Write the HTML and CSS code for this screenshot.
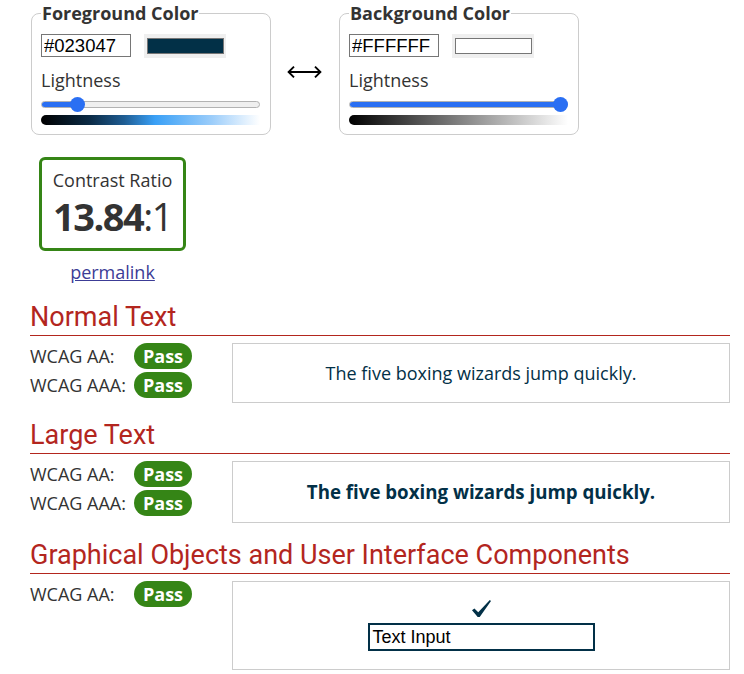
FILE: index.html
```html
<!DOCTYPE html>
<html lang="en">
<head>
<meta charset="utf-8">
<title>Contrast Checker</title>
<link rel="stylesheet" href="styles.css">
</head>
<body>
<div class="page">
  <div class="pickers">
    <fieldset class="picker">
      <legend>Foreground Color</legend>
      <div class="pick-row">
        <input class="hex" type="text" value="#023047">
        <div class="swatch"><span class="swatch-color swatch-fg"></span></div>
      </div>
      <div class="light-label">Lightness</div>
      <div class="slider">
        <div class="track"><div class="fill" style="width:36px"></div></div>
        <div class="thumb" style="left:29px"></div>
      </div>
      <div class="grad grad-fg"></div>
    </fieldset>
    <div class="swap" aria-label="swap colors">
      <svg width="35" height="14" viewBox="0 0 35 14" aria-hidden="true">
        <path d="M1.5 7 H33.5" stroke="#000" stroke-width="1.8" fill="none"/>
        <path d="M7 1.6 L1.6 7 L7 12.4" stroke="#000" stroke-width="1.9" fill="none" stroke-linejoin="miter"/>
        <path d="M28 1.6 L33.4 7 L28 12.4" stroke="#000" stroke-width="1.9" fill="none" stroke-linejoin="miter"/>
      </svg>
    </div>
    <fieldset class="picker">
      <legend>Background Color</legend>
      <div class="pick-row">
        <input class="hex" type="text" value="#FFFFFF">
        <div class="swatch"><span class="swatch-color swatch-bg"></span></div>
      </div>
      <div class="light-label">Lightness</div>
      <div class="slider">
        <div class="track"><div class="fill" style="width:219px"></div></div>
        <div class="thumb" style="left:204px"></div>
      </div>
      <div class="grad grad-bg"></div>
    </fieldset>
  </div>

  <div class="ratio-wrap">
    <div class="ratio-box">
      <div class="ratio-label">Contrast Ratio</div>
      <div class="ratio-value"><b>13.84</b>:1</div>
    </div>
    <a class="permalink" href="#">permalink</a>
  </div>

  <section class="result">
    <h2 class="result-title">Normal Text</h2>
    <div class="result-body">
      <div class="checks">
        <div class="check"><span class="lbl">WCAG AA:</span><span class="pass">Pass</span></div>
        <div class="check"><span class="lbl">WCAG AAA:</span><span class="pass">Pass</span></div>
      </div>
      <div class="sample sample-normal">The five boxing wizards jump quickly.</div>
    </div>
  </section>

  <section class="result">
    <h2 class="result-title">Large Text</h2>
    <div class="result-body">
      <div class="checks">
        <div class="check"><span class="lbl">WCAG AA:</span><span class="pass">Pass</span></div>
        <div class="check"><span class="lbl">WCAG AAA:</span><span class="pass">Pass</span></div>
      </div>
      <div class="sample sample-large">The five boxing wizards jump quickly.</div>
    </div>
  </section>

  <section class="result">
    <h2 class="result-title">Graphical Objects and User Interface Components</h2>
    <div class="result-body">
      <div class="checks">
        <div class="check"><span class="lbl">WCAG AA:</span><span class="pass">Pass</span></div>
      </div>
      <div class="sample sample-ui">
        <svg class="checkmark" width="19" height="17" viewBox="0 0 18 16" aria-hidden="true">
          <path d="M0 9.6 L2.3 7.9 L5.9 11.6 L16.9 0 L18 0.8 L7.3 16 L5.4 16 Z" fill="#023047"/>
        </svg>
        <div class="ui-input">Text Input</div>
      </div>
    </div>
  </section>
</div>
</body>
</html>
```

FILE: styles.css
```css
html, body {
  margin: 0;
  padding: 0;
  background: #fff;
}

body {
  font-family: "Open Sans", "Liberation Sans", sans-serif;
  color: #333;
}

.page {
  padding: 1px 14px 0 30px;
}

/* ---------- colour pickers ---------- */
.pickers {
  display: flex;
  align-items: flex-start;
}

.picker {
  margin: 0 0 0 1px;
  width: 240px;
  box-sizing: border-box;
  border: 1px solid #ccc;
  border-radius: 8px;
  padding: 9px 10px 9px 9px;
  min-width: 0;
}

.picker legend {
  font-weight: 700;
  font-size: 18px;
  line-height: 24px;
  padding: 0 1px;
  color: #333;
}

.pick-row {
  display: flex;
  align-items: flex-start;
  gap: 13px;
}

.hex {
  width: 90px;
  height: 23px;
  box-sizing: border-box;
  margin: 0;
  border: 1px solid #767676;
  padding: 0 2px;
  font-family: "Liberation Sans", Arial, sans-serif;
  font-size: 18.5px;
  color: #000;
  background: #fff;
  outline: none;
}

.swatch {
  width: 82px;
  height: 24px;
  background: #efefef;
  display: flex;
  align-items: center;
  justify-content: center;
}

.swatch-color {
  display: block;
  width: 77px;
  height: 16px;
  box-sizing: border-box;
  border: 1px solid #767676;
}

.swatch-fg { background: #023047; }
.swatch-bg { background: #ffffff; }

.light-label {
  margin-top: 10px;
  font-size: 18px;
  line-height: 24px;
  color: #333;
}

.slider {
  position: relative;
  margin-top: 5px;
  width: 219px;
  height: 16px;
}

.track {
  position: absolute;
  left: 0;
  right: 0;
  top: 4px;
  height: 7px;
  box-sizing: border-box;
  border: 1px solid #b2b2b2;
  border-radius: 4px;
  background: #efefef;
  overflow: hidden;
}

.track .fill {
  margin: -1px 0 0 -1px;
  height: 7px;
  background: #2a6ff3;
}

.thumb {
  position: absolute;
  top: 0;
  width: 15px;
  height: 15px;
  border-radius: 50%;
  background: #2a6ff3;
}

.grad {
  margin-top: 2px;
  width: 219px;
  height: 10px;
  border-radius: 5px 0 0 5px;
}

.grad-fg {
  background: linear-gradient(90deg, #000 0%, #0b2a44 22%, #1f5d93 38%, #3aa0f6 52%, #9ccdfa 78%, #fff 100%);
}

.grad-bg {
  background: linear-gradient(90deg, #000 0%, #808080 50%, #fff 100%);
}

.swap {
  width: 67px;
  margin-top: 64px;
  display: flex;
  justify-content: center;
}

.swap svg {
  display: block;
}

/* ---------- ratio ---------- */
.ratio-wrap {
  margin: 22px 0 0 9px;
  width: 147px;
  text-align: center;
}

.ratio-box {
  box-sizing: border-box;
  height: 94px;
  border: 3px solid #358516;
  border-radius: 6px;
  padding-top: 8px;
}

.ratio-label {
  font-size: 18px;
  line-height: 24px;
}

.ratio-value {
  margin-top: 2px;
  font-size: 38px;
  line-height: 44px;
  color: #333;
  letter-spacing: -1.5px;
}

.ratio-value b {
  font-weight: 700;
}

.permalink {
  display: inline-block;
  margin-top: 9px;
  font-size: 18px;
  line-height: 24px;
  color: #3c3c96;
}

/* ---------- results ---------- */
.result-title {
  margin: 18px 0 0;
  font-family: Roboto, "Open Sans", sans-serif;
  font-weight: 400;
  font-size: 27px;
  line-height: 30px;
  color: #b3261e;
  padding-bottom: 3px;
  border-bottom: 1px solid #b3261e;
}

.result + .result .result-title {
  margin-top: 17px;
}

.result-body {
  margin-top: 7px;
  display: grid;
  grid-template-columns: 202px 1fr;
  align-items: start;
}

.checks {
  display: flex;
  flex-direction: column;
  gap: 3px;
}

.check {
  display: flex;
  align-items: center;
}

.lbl {
  width: 104px;
  font-size: 18px;
  line-height: 26px;
}

.pass {
  height: 26px;
  line-height: 26px;
  padding: 0 9px;
  border-radius: 13px;
  background: #358516;
  color: #fff;
  font-weight: 700;
  font-size: 18px;
}

.sample {
  border: 1px solid #ccc;
  text-align: center;
  color: #023047;
}

.sample-normal {
  padding: 17px 10px;
  font-size: 18px;
  line-height: 24px;
}

.sample-large {
  padding: 17px 10px;
  font-size: 18.7px;
  line-height: 26px;
  font-weight: 700;
}

.sample-ui {
  padding: 18px 10px 18px;
  display: flex;
  flex-direction: column;
  align-items: center;
}

.checkmark {
  display: block;
  flex-shrink: 0;
  margin-bottom: 6px;
}

.ui-input {
  flex-shrink: 0;
  width: 227px;
  height: 28px;
  box-sizing: border-box;
  border: 2px solid #023047;
  padding: 0 3px;
  text-align: left;
  font-family: "Liberation Sans", Arial, sans-serif;
  font-size: 18px;
  line-height: 24px;
  color: #000;
}
```
